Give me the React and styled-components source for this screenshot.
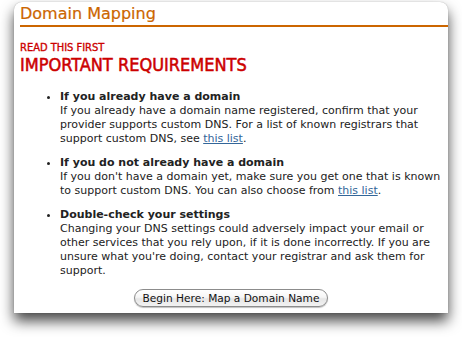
import React from "react";
import styled, { createGlobalStyle } from "styled-components";

const Global = createGlobalStyle`
  html, body { margin: 0; padding: 0; background: #fff; }
  body { font-family: "DejaVu Sans", Verdana, sans-serif; }
`;

const Stage = styled.div`
  width: 462px;
  height: 337px;
  box-sizing: border-box;
  padding: 2px 14px 0 14px;
  background: #fff;
  overflow: hidden;
`;

const Panel = styled.div`
  height: 311px;
  box-sizing: border-box;
  background: #fff;
  border-radius: 8px 8px 0 0;
  box-shadow: 0 8px 14px rgba(0, 0, 0, 0.72), 0 0 1px rgba(0, 0, 0, 0.35);
  padding: 2px 0 0 6px;
  display: flex;
  flex-direction: column;
`;

const Title = styled.h1`
  margin: 0;
  font-size: 16px;
  font-weight: normal;
  -webkit-text-stroke: 0.2px #cc6600;
  color: #cc6600;
  line-height: 20px;
  padding-bottom: 1px;
  border-bottom: 2px solid #cc6600;
`;

const Condensed = `
  font-family: "DejaVu Sans Condensed", "DejaVu Sans", sans-serif;
  font-stretch: condensed;
`;

const Kicker = styled.div`
  ${Condensed}
  margin-top: 14px;
  font-size: 11px;
  font-weight: normal;
  -webkit-text-stroke: 0.35px #cc0000;
  color: #cc0000;
  line-height: 13px;
`;

const Heading = styled.h2`
  ${Condensed}
  margin: 0;
  font-size: 18px;
  font-weight: normal;
  -webkit-text-stroke: 0.5px #cc0000;
  color: #cc0000;
  line-height: 21px;
`;

const List = styled.ul`
  margin: 15px 0 0 0;
  padding: 0 0 0 40px;
  list-style: disc;
  font-size: 11px;
  line-height: 14px;
  color: #222;
`;

const Item = styled.li`
  margin-bottom: 10px;
  &:last-child { margin-bottom: 0; }
`;

const ItemTitle = styled.div`
  font-weight: bold;
`;

const Link = styled.a`
  color: #336699;
  text-decoration: underline;
`;

const ButtonRow = styled.div`
  display: flex;
  justify-content: center;
  margin-top: 11px;
  padding-right: 6px;
`;

const Button = styled.button`
  height: 18px;
  padding: 0 8px;
  border-radius: 9px;
  border: 1px solid #8c8c8c;
  background: linear-gradient(#ffffff 0%, #f6f6f6 45%, #e6e6e6 55%, #f2f2f2 100%);
  font-family: "DejaVu Sans", sans-serif;
  font-size: 10.6px;
  color: #111;
  line-height: 16px;
  box-shadow: 0 1px 1px rgba(0, 0, 0, 0.25);
`;

export default function App() {
  return (
    <>
      <Global />
      <Stage>
        <Panel>
          <Title>Domain Mapping</Title>
          <Kicker>READ THIS FIRST</Kicker>
          <Heading>IMPORTANT REQUIREMENTS</Heading>
          <List>
            <Item>
              <ItemTitle>If you already have a domain</ItemTitle>
              If you already have a domain name registered, confirm that your
              provider supports custom DNS. For a list of known registrars that
              support custom DNS, see <Link href="#">this list</Link>.
            </Item>
            <Item>
              <ItemTitle>If you do not already have a domain</ItemTitle>
              If you don't have a domain yet, make sure you get one that is known
              to support custom DNS. You can also choose from{" "}
              <Link href="#">this list</Link>.
            </Item>
            <Item>
              <ItemTitle>Double-check your settings</ItemTitle>
              Changing your DNS settings could adversely impact your email or
              other services that you rely upon, if it is done incorrectly. If you
              are unsure what you're doing, contact your registrar and ask them
              for support.
            </Item>
          </List>
          <ButtonRow>
            <Button>Begin Here: Map a Domain Name</Button>
          </ButtonRow>
        </Panel>
      </Stage>
    </>
  );
}
